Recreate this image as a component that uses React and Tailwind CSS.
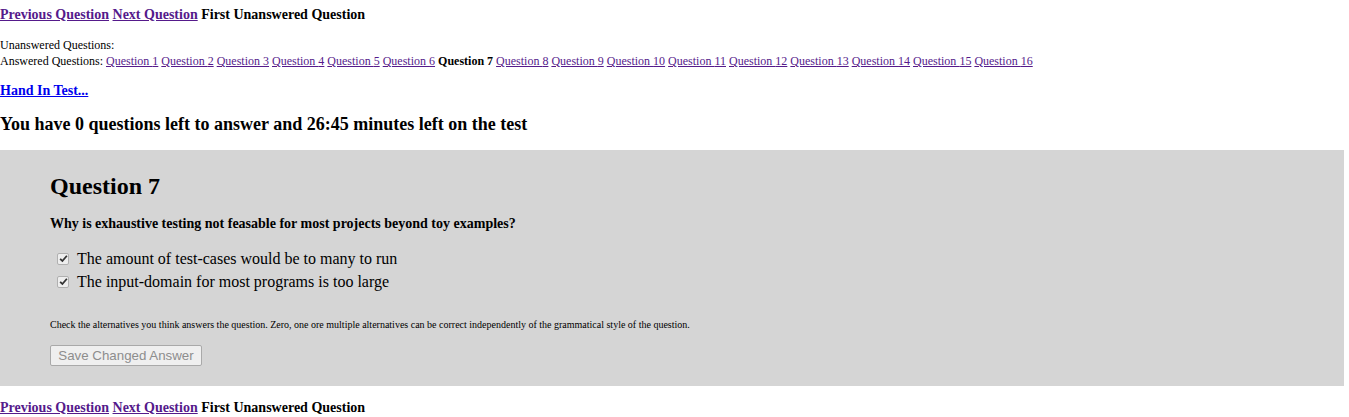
import React from 'react';

const visited = 'text-[#551a8b] underline';

function NavLinks() {
  return (
    <div className="text-[14px] font-bold leading-[16px]">
      <a href="#" className={visited}>Previous Question</a>{' '}
      <a href="#" className={visited}>Next Question</a>{' '}
      <span>First Unanswered Question</span>
    </div>
  );
}

function Check({ label }) {
  return (
    <div className="flex items-center h-[23px]">
      <span className="ml-[7px] mr-[8px] flex h-[12px] w-[12px] items-center justify-center rounded-[2px] border border-[#b0b0b0] bg-[#eeeeee]">
        <svg viewBox="0 0 12 12" className="h-[9px] w-[9px]">
          <path d="M1.5 6.5 L4.5 9.3 L10.5 2.3" fill="none" stroke="#333" strokeWidth="2.4" />
        </svg>
      </span>
      <span className="text-[16px]">{label}</span>
    </div>
  );
}

export default function App() {
  const questions = Array.from({ length: 16 }, (_, i) => i + 1);
  return (
    <div className="min-h-[417px] bg-white text-black font-['Liberation_Serif',serif]">
      <div className="pt-[7px]">
        <NavLinks />
      </div>

      <div className="mt-[14px] text-[12px] leading-[16px]">
        <div>Unanswered Questions:</div>
        <div>
          Answered Questions:{' '}
          {questions.map((n) =>
            n === 7 ? (
              <span key={n}>
                <b>Question 7</b>{' '}
              </span>
            ) : (
              <span key={n}>
                <a href="#" className={visited}>Question {n}</a>{' '}
              </span>
            )
          )}
        </div>
      </div>

      <div className="mt-[14px] text-[14px] font-bold leading-[16px]">
        <a href="#" className="text-[#0000ee] underline">Hand In Test...</a>
      </div>

      <h2 className="mt-[14px] text-[18px] font-bold leading-[22px]">
        You have 0 questions left to answer and 26:45 minutes left on the test
      </h2>

      <div className="mt-[15px] w-[1344px] bg-[#d5d5d5] pl-[50px] pt-[22px] pb-[19px]">
        <h1 className="text-[24px] font-bold leading-[28px]">Question 7</h1>
        <p className="mt-[16px] text-[14px] font-bold leading-[16px]">
          Why is exhaustive testing not feasable for most projects beyond toy examples?
        </p>
        <div className="mt-[15px]">
          <Check label="The amount of test-cases would be to many to run" />
          <Check label="The input-domain for most programs is too large" />
        </div>
        <p className="mt-[26px] text-[10px] leading-[12px]">
          Check the alternatives you think answers the question. Zero, one ore multiple alternatives can be correct independently of the grammatical style of the question.
        </p>
        <button
          disabled
          className="mt-[14px] h-[21px] w-[152px] border border-[#a9a9a9] bg-[#efefef] font-['Liberation_Sans',sans-serif] text-[13.3px] leading-[15px] text-[#8d8d8d] rounded-[2px]"
        >
          Save Changed Answer
        </button>
      </div>

      <div className="mt-[14px]">
        <NavLinks />
      </div>
    </div>
  );
}
